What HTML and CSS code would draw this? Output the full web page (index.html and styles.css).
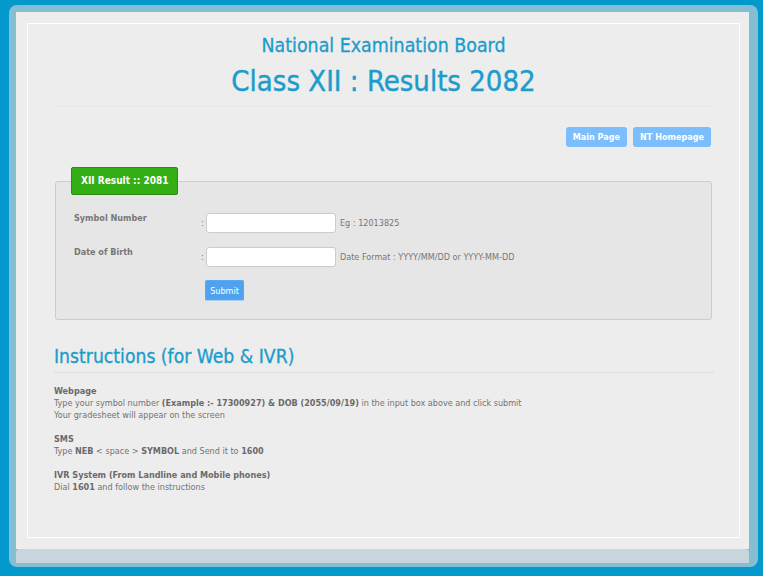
FILE: index.html
```html
<!DOCTYPE html>
<html lang="en">
<head>
<meta charset="utf-8">
<title>Class XII : Results 2082</title>
<link rel="stylesheet" href="styles.css">
</head>
<body>
<div class="frame">
  <div class="main">
    <div class="panel">
      <header class="header">
        <h2 class="board">National Examination Board</h2>
        <h1 class="title">Class XII : Results 2082</h1>
      </header>
      <div class="divider"></div>
      <nav class="links">
        <a class="link-btn" href="#">Main Page</a>
        <a class="link-btn" href="#">NT Homepage</a>
      </nav>
      <form class="result-form">
        <fieldset class="fieldset">
          <legend class="legend">XII Result :: 2081</legend>
          <div class="row">
            <label class="label" for="symbol">Symbol Number</label>
            <div class="field">
              <span class="colon">:</span>
              <input class="input" id="symbol" type="text">
              <span class="hint">Eg : 12013825</span>
            </div>
          </div>
          <div class="row">
            <label class="label" for="dob">Date of Birth</label>
            <div class="field">
              <span class="colon">:</span>
              <input class="input" id="dob" type="text">
              <span class="hint">Date Format : YYYY/MM/DD or YYYY-MM-DD</span>
            </div>
          </div>
          <div class="submit-row">
            <button class="submit" type="button">Submit</button>
          </div>
        </fieldset>
      </form>
      <section class="instructions">
        <h3 class="inst-title">Instructions (for Web &amp; IVR)</h3>
        <div class="inst-body">
          <p class="inst-block"><b>Webpage</b><br>Type your symbol number <b>(Example :- 17300927) &amp; DOB (2055/09/19)</b> in the input box above and click submit<br>Your gradesheet will appear on the screen</p>
          <p class="inst-block"><b>SMS</b><br>Type <b>NEB</b> &lt; space &gt; <b>SYMBOL</b> and Send it to <b>1600</b></p>
          <p class="inst-block"><b>IVR System (From Landline and Mobile phones)</b><br>Dial <b>1601</b> and follow the instructions</p>
        </div>
      </section>
    </div>
  </div>
  <div class="footer"></div>
</div>
</body>
</html>
```

FILE: styles.css
```css
html, body {
  margin: 0;
  padding: 0;
}

body {
  background: #0399cd;
  font-family: "DejaVu Sans Condensed", "DejaVu Sans", Tahoma, sans-serif;
  font-stretch: condensed;
  font-size: 9px;
  line-height: 12px;
  color: #737373;
}

.frame {
  margin: 5px 5px 9px 9px;
  padding: 7px 9px 4px 7px;
  background: #83bed3;
  border-radius: 8px;
}

.main {
  background: #ededed;
  padding: 11px 9px 11px 11px;
}

.panel {
  border: 1px solid #fff;
  height: 513px;
  padding: 0 27px;
}

.footer {
  height: 14px;
  background: #c8d5dd;
  border-radius: 4px 4px 0 0;
}

.header {
  padding-top: 11px;
  text-align: center;
  color: #1b9ccb;
}

.board {
  margin: 0;
  font-size: 19.4px;
  line-height: 22px;
  font-weight: normal;
  -webkit-text-stroke: 0.3px #1b9ccb;
}

.title {
  margin: 8px 0 0;
  font-size: 29px;
  line-height: 32px;
  font-weight: normal;
  -webkit-text-stroke: 0.4px #1b9ccb;
}

.divider {
  margin-top: 9px;
  height: 1px;
  background: #e7e7e7;
}

.links {
  margin-top: 20px;
  margin-right: 1px;
  display: flex;
  justify-content: flex-end;
  gap: 6px;
}

.link-btn {
  display: block;
  height: 20px;
  line-height: 20px;
  padding: 0 7px;
  background: #7bbefb;
  color: #fff;
  font-weight: bold;
  font-size: 9px;
  text-decoration: none;
  border-radius: 3px;
}

.result-form {
  margin: 20px 0 0;
}

.fieldset {
  margin: 0;
  padding: 18px 18px 18px;
  border: 1px solid #cccccc;
  border-radius: 3px;
  background: #e6e6e6;
}

.legend {
  margin-left: -3px;
  padding: 0 9px;
  height: 28px;
  line-height: 26px;
  box-sizing: border-box;
  background: #33ae14;
  border: 1px solid #2a8d11;
  border-radius: 2px;
  color: #fff;
  font-weight: bold;
  font-size: 10px;
}

.row {
  display: flex;
  align-items: flex-start;
  margin-bottom: 14px;
}

.label {
  width: 126px;
  flex: none;
  font-weight: bold;
  color: #777;
  margin-top: -1px;
}

.field {
  display: flex;
  align-items: baseline;
}

.colon {
  width: 6px;
  padding-left: 1px;
  box-sizing: border-box;
}

.input {
  box-sizing: border-box;
  width: 130px;
  height: 20px;
  margin: 0 4px 0 0;
  padding: 0 4px;
  border: 1px solid #cccccc;
  border-radius: 3px;
  background: #fff;
  font: inherit;
}

.hint {
  color: #777;
}

.submit-row {
  padding-left: 131px;
  margin-top: -1px;
}

.submit {
  display: block;
  width: 39px;
  height: 21px;
  padding: 0;
  border: 1px solid #5aa9ef;
  border-bottom-color: #a9d0f3;
  border-radius: 2px;
  background: #4fa2ee;
  color: #fff;
  font: inherit;
  font-size: 9px;
}

.instructions {
  margin: 26px -2px 0 -1px;
}

.inst-title {
  margin: 0;
  padding-bottom: 4px;
  border-bottom: 1px solid #dedede;
  font-size: 19.2px;
  line-height: 22px;
  font-weight: normal;
  color: #1b9ccb;
  -webkit-text-stroke: 0.3px #1b9ccb;
}

.inst-body {
  margin-top: 12px;
}

.inst-block {
  margin: 0 0 12px;
}

.inst-block b {
  color: #6a6a6a;
}
```
